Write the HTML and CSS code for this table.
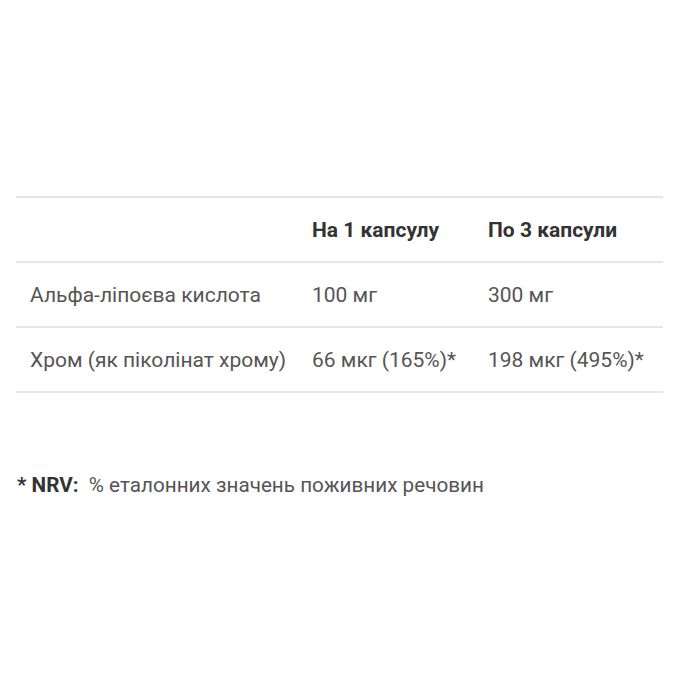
FILE: index.html
```html
<!DOCTYPE html>
<html>
<head>
<meta charset="utf-8">
<link rel="stylesheet" href="styles.css">
</head>
<body>
<div class="page">
  <table class="nutri">
    <thead>
      <tr>
        <th class="c1"></th>
        <th class="c2">На 1 капсулу</th>
        <th class="c3">По 3 капсули</th>
      </tr>
    </thead>
    <tbody>
      <tr>
        <td>Альфа-ліпоєва кислота</td>
        <td>100 мг</td>
        <td>300 мг</td>
      </tr>
      <tr>
        <td>Хром (як піколінат хрому)</td>
        <td>66 мкг (165%)*</td>
        <td>198 мкг (495%)*</td>
      </tr>
    </tbody>
  </table>
  <p class="note"><b>* NRV:</b>&nbsp; % еталонних значень поживних речовин</p>
</div>
</body>
</html>
```
FILE: styles.css
```css
html, body { margin: 0; padding: 0; background: #fff; }
.page {
  padding: 196px 37px 0 16px;
  font-family: Roboto, "Liberation Sans", sans-serif;
  color: #555;
}
.nutri {
  width: 100%;
  border-collapse: collapse;
  font-size: 21px;
}
.nutri th, .nutri td {
  text-align: left;
  padding: 0 0 0 14px;
  height: 63px;
  border-top: 2px solid #e6e6e6;
  border-bottom: 2px solid #e6e6e6;
  white-space: nowrap;
}
.nutri th { color: #333; font-weight: 700; }
.c1 { width: 268px; }
.c2 { width: 162px; }
.note {
  margin: 80px 0 0 1px;
  font-size: 20.7px;
  color: #555;
}
.note b { color: #333; }
```
